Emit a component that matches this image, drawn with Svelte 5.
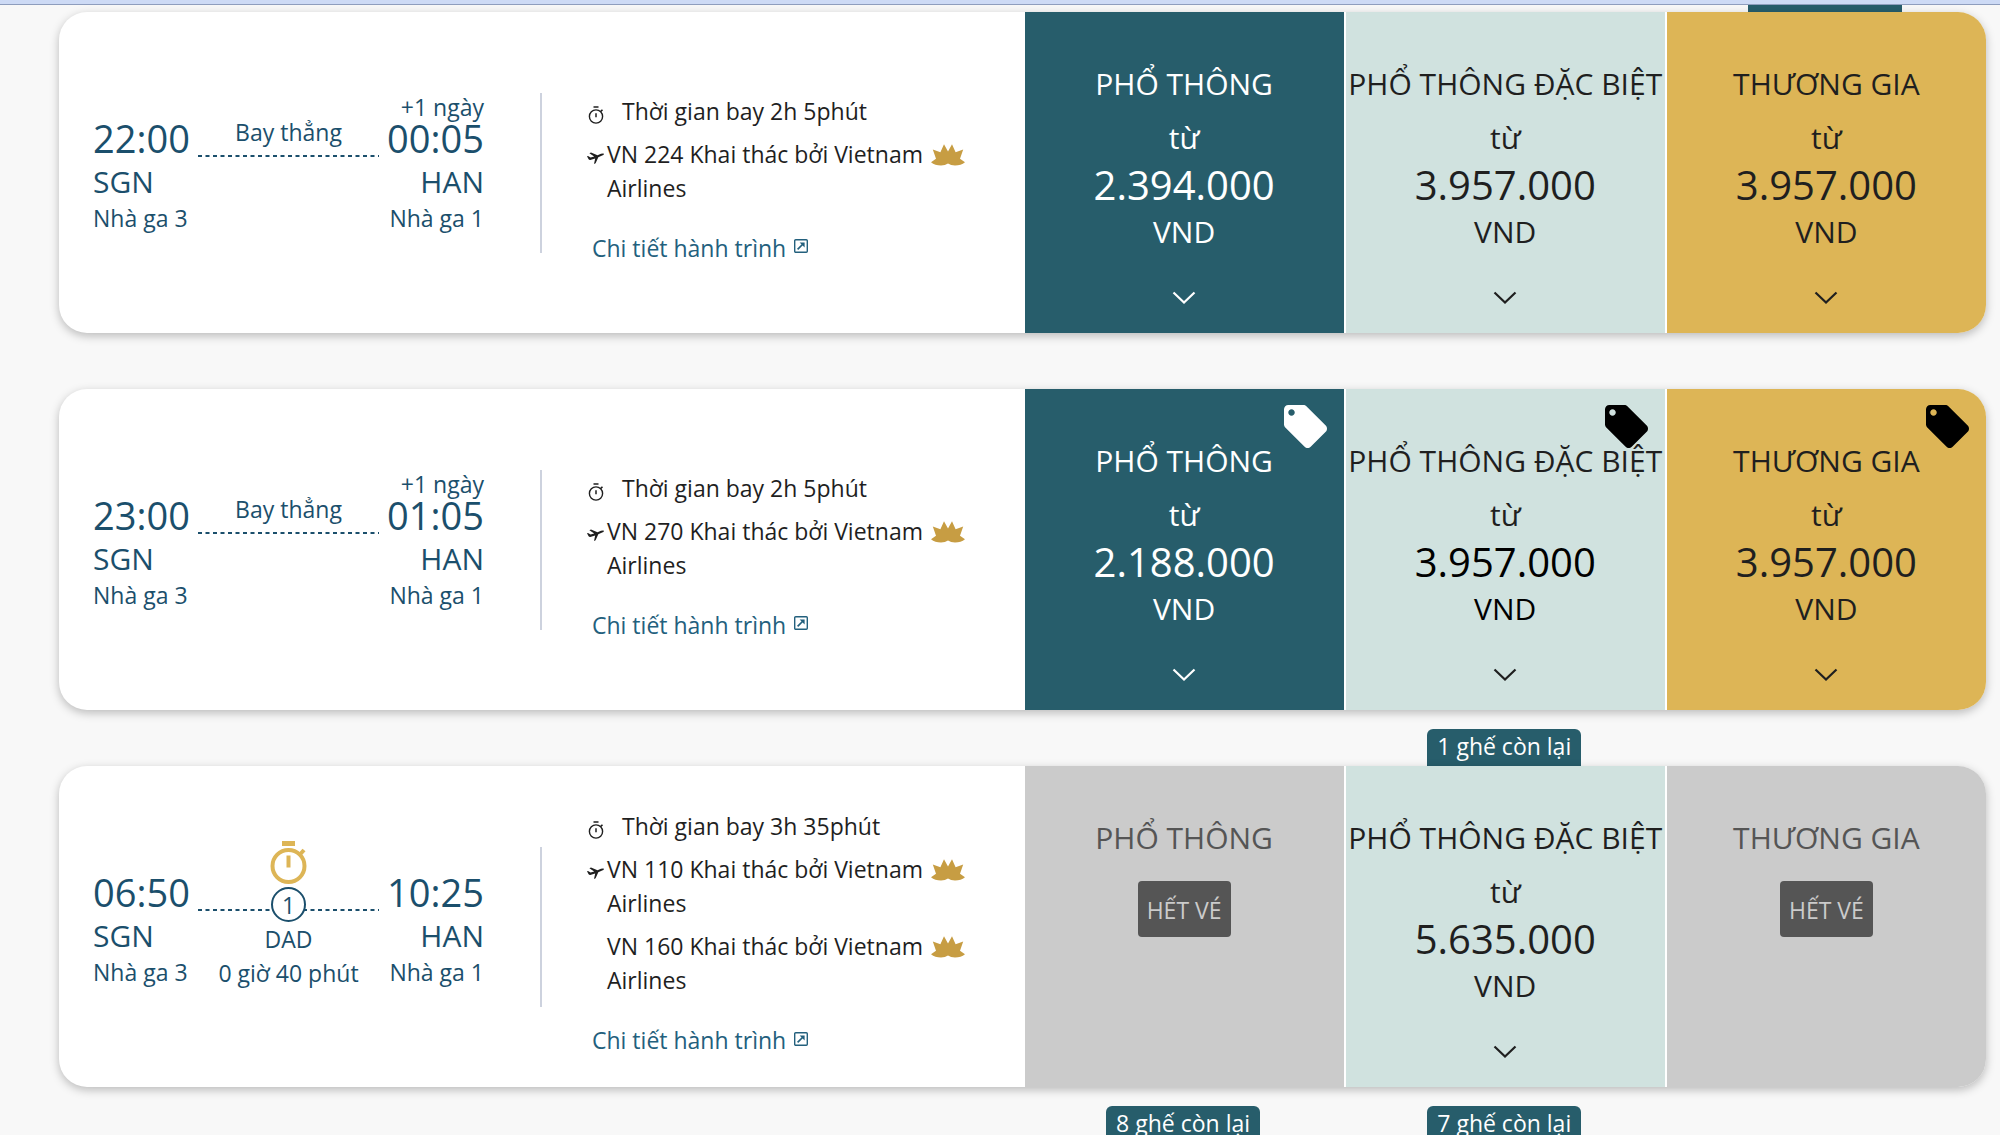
<script>
  const ECONOMY = 'PHỔ THÔNG';
  const PREMIUM = 'PHỔ THÔNG ĐẶC BIỆT';
  const BUSINESS = 'THƯƠNG GIA';

  const flights = [
    {
      from: { time: '22:00', code: 'SGN', terminal: 'Nhà ga 3' },
      to: { time: '00:05', code: 'HAN', terminal: 'Nhà ga 1', day: '+1 ngày' },
      duration: '2h 5phút',
      legs: ['VN 224'],
      seats: [null, null, ''],
      fares: [
        { name: ECONOMY, tone: 'teal', price: '2.394.000' },
        { name: PREMIUM, tone: 'mint', price: '3.957.000' },
        { name: BUSINESS, tone: 'gold', price: '3.957.000' }
      ]
    },
    {
      from: { time: '23:00', code: 'SGN', terminal: 'Nhà ga 3' },
      to: { time: '01:05', code: 'HAN', terminal: 'Nhà ga 1', day: '+1 ngày' },
      duration: '2h 5phút',
      legs: ['VN 270'],
      seats: [null, null, null],
      fares: [
        { name: ECONOMY, tone: 'teal', price: '2.188.000', tag: true },
        { name: PREMIUM, tone: 'mint', price: '3.957.000', tag: true, strong: true },
        { name: BUSINESS, tone: 'gold', price: '3.957.000', tag: true }
      ]
    },
    {
      from: { time: '06:50', code: 'SGN', terminal: 'Nhà ga 3' },
      to: { time: '10:25', code: 'HAN', terminal: 'Nhà ga 1' },
      stop: { count: 1, code: 'DAD', wait: '0 giờ 40 phút' },
      duration: '3h 35phút',
      legs: ['VN 110', 'VN 160'],
      seats: [null, '1 ghế còn lại', null],
      fares: [
        { name: ECONOMY, tone: 'grey' },
        { name: PREMIUM, tone: 'mint', price: '5.635.000' },
        { name: BUSINESS, tone: 'grey' }
      ]
    }
  ];

  const nextSeats = ['8 ghế còn lại', '7 ghế còn lại', null];
</script>

{#snippet seatStrip(seats, first)}
  <div class="strip" class:first>
    {#each seats as seat}
      <div class="slot">
        {#if seat !== null}<span class="seats">{seat}</span>{/if}
      </div>
    {/each}
  </div>
{/snippet}

{#snippet lotus()}
  <svg class="lotus" viewBox="0 0 34 22" aria-hidden="true">
    <path d="M0 18.200L5 14.800L1.800 5.400L9.400 8.200L13 .3L17 7.400L21 .3L24.600 8.200L32.200 5.400L29 14.800L34 18.200Q30 21.400 24 21.400Q19.800 21.400 17 19.400Q14.200 21.400 10 21.400Q4 21.400 0 18.200Z" />
  </svg>
{/snippet}

<main>
  <div class="topbar"></div>
  {#each flights as flight, i}
    {@render seatStrip(flight.seats, i === 0)}
    <article class="card">
      <div class="info">
        <div class="route">
          <div class="place">
            <div class="day"></div>
            <div class="time">{flight.from.time}</div>
            <div class="code">{flight.from.code}</div>
            <div class="small">{flight.from.terminal}</div>
          </div>
          <div class="path">
            <div class="above">
              {#if flight.stop}
                <svg class="watch" viewBox="0 0 37 43" aria-hidden="true">
                  <path d="M12 0h13v5H12zM16.500 14.500h4v12h-4z" fill="#ddb556" />
                  <circle cx="18.500" cy="25" r="16" fill="none" stroke="#ddb556" stroke-width="4" />
                  <path d="M29 14.500l5-5.500" stroke="#ddb556" stroke-width="4" />
                </svg>
              {:else}
                <div class="small direct">Bay thẳng</div>
              {/if}
            </div>
            <svg class="dots" aria-hidden="true">
              <line x1="0" y1="1" x2="100%" y2="1" stroke="#1b4f6c" stroke-width="2" stroke-dasharray="4 3.500" />
            </svg>
            {#if flight.stop}
              <span class="count">{flight.stop.count}</span>
              <div class="below">
                <div>{flight.stop.code}</div>
                <div>{flight.stop.wait}</div>
              </div>
            {/if}
          </div>
          <div class="place end">
            <div class="day">{flight.to.day ?? ''}</div>
            <div class="time">{flight.to.time}</div>
            <div class="code">{flight.to.code}</div>
            <div class="small">{flight.to.terminal}</div>
          </div>
        </div>
        <div class="details">
          <div class="duration">
            <svg class="clock" viewBox="0 0 16 18" aria-hidden="true">
              <g fill="none" stroke="#1f1f1f">
                <circle cx="8" cy="10.500" r="6.600" stroke-width="1.400" />
                <path d="M5.500 .9h5M8 7.200v4" stroke-width="1.500" />
                <path d="M12.800 5.400l1.700-1.700" stroke-width="1.600" />
              </g>
            </svg>
            <span>Thời gian bay {flight.duration}</span>
          </div>
          {#each flight.legs as leg, n}
            <div class="leg">
              <div class="mark">
                {#if n === 0}
                  <svg class="plane" viewBox="0 0 17 12" aria-hidden="true">
                    <path d="M0 4.200l1-.3 2.600 1.700 3.600-1.200L2.400 1.200 4 .5l6.500 2.700 3.500-1.400q2.400-.8 3 0 .1.900-2.400 2l-3.300 1.500-2.700 6-1.600.7 1.200-5.600-4.900 1.600q-1 .2-1.700-.8z" fill="#1f1f1f" />
                  </svg>
                {/if}
              </div>
              <div class="operator">{leg} Khai thác bởi Vietnam Airlines</div>
              {@render lotus()}
            </div>
          {/each}
          <a class="more" href="#details">
            Chi tiết hành trình
            <svg class="ext" viewBox="0 0 14 14" aria-hidden="true">
              <rect x=".7" y=".7" width="12.600" height="12.600" rx="1" fill="none" stroke="#23607d" stroke-width="1.400" />
              <path d="M3.600 10.400L9 5" stroke="#23607d" stroke-width="1.700" />
              <path d="M5.600 3.400h5v5z" fill="#23607d" />
            </svg>
          </a>
        </div>
      </div>
      {#each flight.fares as fare}
        <button class="fare {fare.tone}" class:strong={fare.strong} type="button" disabled={!fare.price}>
          {#if fare.tag}
            <svg class="tag" viewBox="2 2 20 20" aria-hidden="true">
              <path d="M21.410 11.580l-9-9C12.050 2.220 11.550 2 11 2H4c-1.100 0-2 .9-2 2v7c0 .55.22 1.050.59 1.420l9 9c.36.36.86.58 1.410.58.55 0 1.050-.22 1.410-.59l7-7c.37-.36.59-.86.59-1.410 0-.55-.23-1.060-.59-1.420zM5.500 7C4.670 7 4 6.330 4 5.500S4.670 4 5.500 4 7 4.670 7 5.500 6.330 7 5.500 7z" />
            </svg>
          {/if}
          <span class="name">{fare.name}</span>
          {#if fare.price}
            <span class="fromword">từ</span>
            <span class="price">{fare.price}</span>
            <span class="currency">VND</span>
            <svg class="chevron" viewBox="0 0 24 13" aria-hidden="true">
              <path d="M1.500 1.500L12 11.500 22.500 1.500" fill="none" stroke="currentColor" stroke-width="2.200" />
            </svg>
          {:else}
            <span class="soldout">HẾT VÉ</span>
          {/if}
        </button>
      {/each}
    </article>
  {/each}
  {@render seatStrip(nextSeats, false)}
</main>

<style>
  :global(body) {
    background: #f8f8f8;
  }
  main {
    height: 100vh;
    overflow: hidden;
    box-sizing: border-box;
    padding: 0 14px 0 59px;
    font-family: 'Open Sans', 'Noto Sans', sans-serif;
    font-size: 23px;
    line-height: 34px;
    color: #1f1f1f;
  }
  .topbar {
    height: 4px;
    margin: 0 -14px 0 -59px;
    background: #cddaf5;
    border-bottom: 1px solid #8e9dbd;
  }
  .strip,
  .card {
    display: grid;
    grid-template-columns: 3fr repeat(3, minmax(0, 1fr));
  }
  .strip {
    height: 56px;
    grid-template-rows: 100%;
  }
  .strip.first {
    height: 7px;
    overflow: hidden;
  }
  .slot {
    display: flex;
    align-items: flex-end;
    justify-content: center;
  }
  .slot:first-child {
    grid-column: 2;
  }
  .seats {
    flex: none;
    box-sizing: border-box;
    min-width: 154px;
    height: 37px;
    padding: 0 10px;
    text-align: center;
    background: #275d6b;
    color: #fff;
    border-radius: 6px 6px 0 0;
  }
  .card {
    position: relative;
    background: #fff;
    border-radius: 28px;
    box-shadow: 0 3px 10px rgba(0, 0, 0, 0.25);
  }
  .info {
    display: flex;
    align-items: center;
    padding: 0 56px 0 34px;
  }
  .route {
    display: flex;
    flex: 0 1 391px;
    gap: 8px;
    height: 160px;
    padding-right: 56px;
    border-right: 2px solid #cdd2de;
    color: #1b4f6c;
  }
  .place {
    white-space: nowrap;
  }
  .end {
    text-align: right;
  }
  .day,
  .small {
    height: 28px;
    line-height: 28px;
  }
  .time {
    font-size: 38px;
    line-height: 34px;
  }
  .code {
    margin-top: 5px;
    font-size: 30px;
    line-height: 44px;
  }
  .path {
    position: relative;
    flex: 1;
    display: flex;
    flex-direction: column;
    align-items: center;
  }
  .above {
    height: 62px;
    display: flex;
    flex-direction: column;
    justify-content: flex-end;
  }
  .direct {
    margin-bottom: 9px;
  }
  .watch {
    flex: none;
    width: 37px;
    height: 43px;
    margin-bottom: 25px;
  }
  .dots {
    flex: none;
    width: 100%;
    height: 2px;
  }
  .count {
    position: absolute;
    top: 40px;
    box-sizing: border-box;
    width: 35px;
    height: 35px;
    border: 2px solid #1b4f6c;
    border-radius: 50%;
    background: #fff;
    line-height: 32px;
    text-align: center;
  }
  .below {
    margin-top: 11px;
    text-align: center;
    white-space: nowrap;
  }
  .details {
    flex: 1;
    padding: 13px 0 0 45px;
  }
  .duration {
    display: flex;
    align-items: center;
    gap: 18px;
  }
  .clock {
    width: 16px;
    height: 18px;
    margin: 8px 0 0 1px;
  }
  .leg {
    display: flex;
    margin-top: 9px;
  }
  .mark {
    flex: 0 0 20px;
  }
  .plane {
    display: block;
    width: 17px;
    height: 12px;
    margin: 15px 0 0;
  }
  .operator {
    flex: 0 1 324px;
  }
  .lotus {
    flex: none;
    width: 34px;
    height: 22px;
    margin-top: 7px;
    fill: #c79d43;
  }
  .more {
    display: flex;
    align-items: center;
    gap: 8px;
    margin: 26px 0 0 5px;
    color: #23607d;
    text-decoration: none;
  }
  .ext {
    width: 14px;
    height: 14px;
    margin-bottom: 3px;
  }
  .fare {
    position: relative;
    display: flex;
    flex-direction: column;
    align-items: center;
    justify-content: flex-start;
    padding: 50px 0 29px;
    border: 0;
    border-left: 2px solid #fff;
    font: inherit;
    font-size: 30px;
    line-height: 44px;
    color: #1f1f1f;
    white-space: nowrap;
    cursor: pointer;
  }
  .fare:last-child {
    border-radius: 0 28px 28px 0;
  }
  .teal {
    background: #275d6b;
    color: #fff;
  }
  .mint {
    background: #d0e2df;
  }
  .gold {
    background: #ddb556;
  }
  .grey {
    background: #cbcbcb;
    color: #555;
    cursor: default;
  }
  .fromword {
    margin-top: 10px;
  }
  .price {
    font-size: 40px;
    line-height: 50px;
  }
  .strong .price,
  .strong .currency {
    color: #000;
  }
  .chevron {
    width: 24px;
    height: 13px;
    margin-top: 37px;
  }
  .soldout {
    box-sizing: border-box;
    height: 56px;
    margin-top: 21px;
    padding: 0 9px;
    border-radius: 4px;
    background: #555;
    color: #cbcbcb;
    font-size: 23px;
    line-height: 58px;
  }
  .tag {
    position: absolute;
    top: 16px;
    right: 17px;
    width: 43px;
    height: 43px;
    fill: #000;
  }
  .teal .tag {
    fill: #fff;
  }
</style>
